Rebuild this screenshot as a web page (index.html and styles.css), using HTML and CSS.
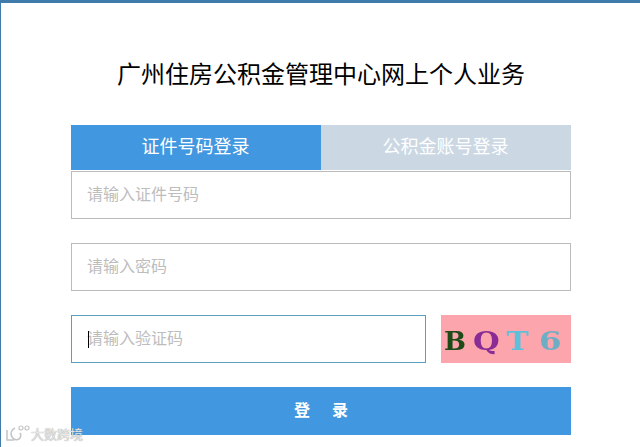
FILE: index.html
```html
<!DOCTYPE html>
<html lang="zh-CN">

<head>
    <meta charset="UTF-8">
    <meta name="viewport" content="width=device-width, initial-scale=1.0">
    <title>广州住房公积金管理中心网上个人业务</title>
    <link rel="stylesheet" href="styles.css">
</head>

<body>
    <div class="page">
        <div class="login-box">
            <h1 class="title">广州住房公积金管理中心网上个人业务</h1>
            <div class="tabs">
                <div class="tab tab-active">证件号码登录</div>
                <div class="tab">公积金账号登录</div>
            </div>
            <form class="login-form">
                <input class="field" type="text" placeholder="请输入证件号码">
                <input class="field" type="password" placeholder="请输入密码">
                <div class="code-row">
                    <div class="code-input">
                        <input class="field field-focus" type="text" placeholder="请输入验证码">
                        <span class="caret"></span>
                    </div>
                    <div class="captcha">
                        <span class="c1">B</span>
                        <span class="c2">Q</span>
                        <span class="c3">T</span>
                        <span class="c4">6</span>
                    </div>
                </div>
                <button class="submit" type="button">登&nbsp;&nbsp;&nbsp;&nbsp;&nbsp;录</button>
            </form>
        </div>
    </div>
    <div class="watermark">
        <svg class="wm-logo" width="25" height="17" viewBox="0 0 25 17" fill="none" stroke="#c4c4c4" stroke-width="1.5">
            <path d="M1 5 V15 H8" />
            <path d="M9 3 C5 5 4 9 6 12 C8 15 12 16 14 13 C15 11 15 9 14 8" />
            <circle cx="15" cy="3" r="2" stroke-width="1.2" />
            <circle cx="21" cy="3" r="2" stroke-width="1.2" />
        </svg>
        <span>大数跨境</span>
    </div>
</body>

</html>
```

FILE: styles.css
```css
body {
    margin: 0;
    font-family: "Liberation Sans", "Noto Sans CJK SC", sans-serif;
    background-color: #fff;
}

.page {
    height: 444px;
    border-top: 3px solid #3f7cac;
    border-left: 1px solid #3f7cac;
    overflow: hidden;
}

.login-box {
    width: 500px;
    margin-left: 70px;
}

.title {
    margin: 0;
    padding-top: 54px;
    height: 68px;
    line-height: 36px;
    font-size: 24px;
    font-weight: normal;
    text-align: center;
    color: #000;
}

.tabs {
    display: flex;
    height: 45px;
}

.tab {
    flex: 1;
    padding-right: 1px;
    line-height: 44px;
    font-size: 18px;
    text-align: center;
    color: #fff;
    background-color: #cbd8e4;
}

.tab-active {
    background-color: #4298e0;
}

.login-form {
    display: flex;
    flex-direction: column;
    gap: 24px;
    padding-top: 1px;
}

.field {
    display: block;
    width: 100%;
    height: 48px;
    box-sizing: border-box;
    padding: 0 15px;
    border: 1px solid #bbb;
    outline: none;
    font-family: inherit;
    font-size: 16px;
}

.field::placeholder {
    color: #bdbdbd;
    opacity: 1;
}

.field-focus {
    border-color: #5b9ebd;
}

.code-row {
    display: flex;
    justify-content: space-between;
}

.code-input {
    position: relative;
    width: 355px;
}

.caret {
    position: absolute;
    left: 17px;
    top: 16px;
    width: 1px;
    height: 17px;
    background-color: #000;
}

.captcha {
    display: flex;
    align-items: center;
    gap: 9px;
    width: 130px;
    height: 48px;
    box-sizing: border-box;
    padding: 3px 0 0 3px;
    background-color: #fda5ac;
    font-family: "DejaVu Serif", serif;
    font-size: 26px;
    font-weight: bold;
    filter: blur(0.4px);
}

.c1 { color: #1d4a17; }
.c2 { color: #8a2c96; transform: scaleX(1.18); }
.c3 { color: #5cc0dc; transform: scaleX(1.15); margin-left: 1px; }
.c4 { color: #6eaec4; margin-left: 3px; transform: scaleX(1.25); transform-origin: left; }

.submit {
    display: block;
    width: 100%;
    height: 48px;
    border: none;
    padding: 0 0 4px;
    background-color: #4298e0;
    color: #fff;
    font-family: inherit;
    font-size: 16px;
    font-weight: bold;
}

.watermark {
    position: absolute;
    left: 6px;
    top: 424px;
    display: flex;
    align-items: center;
    font-size: 13px;
    color: #e4e4e4;
    text-shadow: 0 0 1px #888;
}
```
